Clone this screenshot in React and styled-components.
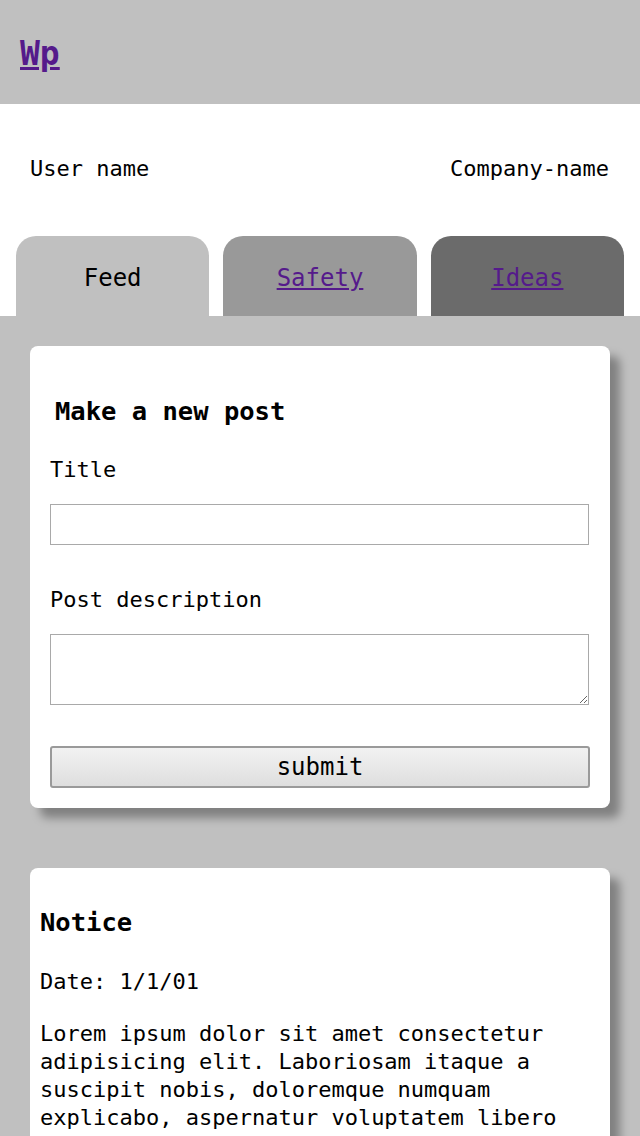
import styled, { createGlobalStyle } from "styled-components"

const GlobalStyle = createGlobalStyle`
    body {
        margin: 0;
        font-family: 'DejaVu Sans Mono', 'Liberation Mono', monospace;
        background: #c0c0c0;
    }
`

export default function App() {

    return (
        <>
            <GlobalStyle />

            <Header>
                <Logo href="#">Wp</Logo>
            </Header>

            <Top>
                <UserRow>
                    <span>User name</span>
                    <span>Company-name</span>
                </UserRow>

                <Tabs>
                    <Tab shade="#c0c0c0">Feed</Tab>
                    <Tab shade="#999999"><a href="#">Safety</a></Tab>
                    <Tab shade="#6b6b6b"><a href="#">Ideas</a></Tab>
                </Tabs>
            </Top>

            <Main>
                <PostForm>
                    <FormTitle>Make a new post</FormTitle>

                    <Label>Title</Label>
                    <Input type="text" />

                    <Label second>Post description</Label>
                    <TextArea />

                    <Submit type="button">submit</Submit>
                </PostForm>

                <Notice>
                    <h2>Notice</h2>
                    <p>Date: 1/1/01</p>
                    <p>
                        Lorem ipsum dolor sit amet consectetur adipisicing elit. Laboriosam itaque a suscipit nobis, doloremque numquam explicabo, aspernatur voluptatem libero quos dolore.
                    </p>
                </Notice>
            </Main>
        </>
    )
}

const Header = styled.header`
    height: 104px;
    background-color: #c0c0c0;
    display: flex;
    align-items: center;
    padding-left: 20px;
`

const Logo = styled.a`
    font-size: 33px;
    font-weight: bold;
    color: #551a8b;
    line-height: 40px;
    margin-top: 3px;
`

const Top = styled.div`
    background: #ffffff;
    padding-top: 52px;
`

const UserRow = styled.div`
    display: flex;
    justify-content: space-between;
    padding: 0 31px 0 30px;
    font-size: 22px;
    line-height: 26px;
    color: #000;
`

const Tabs = styled.nav`
    display: flex;
    gap: 14px;
    padding: 0 16px;
    margin-top: 54px;
`

const Tab = styled.div`
    flex: 1;
    height: 80px;
    background: ${props => props.shade};
    border-radius: 20px 20px 0 0;
    display: flex;
    align-items: center;
    justify-content: center;
    font-size: 24px;
    color: #000;
    padding-top: 4px;
    box-sizing: border-box;

    a {
        color: #551a8b;
    }
`

const Main = styled.main`
    background: #c0c0c0;
    padding: 30px 30px 40px;
    display: flex;
    flex-direction: column;
    gap: 60px;
`

const Card = styled.section`
    background: #ffffff;
    border-radius: 8px;
    box-shadow: 10px 10px 10px #808080;
`

const PostForm = styled(Card)`
    padding: 20px 21px 20px 20px;
    display: flex;
    flex-direction: column;
`

const FormTitle = styled.h2`
    font-size: 25.5px;
    line-height: 30px;
    margin: 30px 0 31px 5px;
`

const Label = styled.label`
    font-size: 22px;
    line-height: 26px;
    margin-top: ${props => props.second ? "42px" : "0"};
    margin-bottom: 21px;
`

const Input = styled.input`
    height: 41px;
    box-sizing: border-box;
    border: 1px solid #a9a9a9;
    margin: 0;
    font-family: inherit;
`

const TextArea = styled.textarea`
    height: 71px;
    box-sizing: border-box;
    border: 1px solid #a9a9a9;
    margin: 0;
    font-family: inherit;
`

const Submit = styled.button`
    margin-top: 41px;
    margin-right: -1px;
    height: 42px;
    border: 2px solid #9a9a9a;
    border-radius: 3px;
    background: linear-gradient(#f2f2f2, #dedede);
    font-family: inherit;
    font-size: 24px;
    color: #000;
`

const Notice = styled(Card)`
    padding: 39px 10px 20px;

    h2 {
        font-size: 25.5px;
        line-height: 30px;
        margin: 0 0 31px;
    }

    p {
        font-size: 22px;
        line-height: 28px;
        margin: 0 0 24px;
    }
`
